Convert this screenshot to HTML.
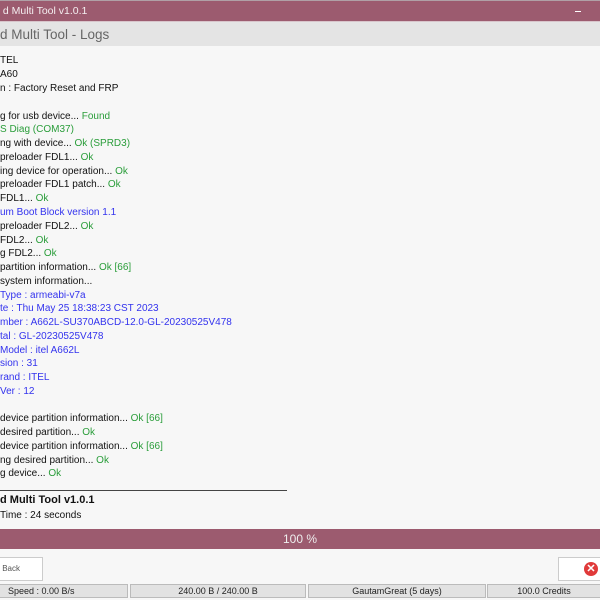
<!DOCTYPE html>
<html><head><style>
body{margin:0;width:600px;height:600px;overflow:hidden;background:#f7f7f7;font-family:"Liberation Sans",sans-serif;position:relative}
.t{position:absolute;top:0;left:0;width:600px;height:21px;background:#9c5b6f;border-top:1px solid #b0a0a6;box-sizing:border-box;color:#f4eef0;font-size:10.5px;line-height:20px}
.h{position:absolute;top:21px;left:0;width:600px;height:25px;background:#e4e4e4;border-top:1px solid #d8c5cb;color:#666;font-size:13.5px;line-height:25px;box-sizing:border-box}
.l{position:absolute;left:0;font-size:10px;line-height:13px;white-space:nowrap;color:#111}
.g{color:#2a9d3a}.b{color:#3333ee}
.p{position:absolute;top:529px;left:0;width:600px;height:20px;background:#9c5b6f;color:#eee;text-align:center;font-size:12px;line-height:20px}
.btn{position:absolute;top:557px;height:24px;background:#fff;border:1px solid #ccc;box-sizing:border-box;font-size:8px;line-height:22px;color:#555}
.s{position:absolute;top:584px;height:14px;background:#e2e2e2;border:1px solid #bbb;box-sizing:border-box;font-size:9px;line-height:12px;text-align:center;color:#222}
</style></head><body>
<div class="t">&nbsp;d Multi Tool v1.0.1<div style="position:absolute;left:575px;top:10px;width:6px;height:1px;background:#fff"></div></div>
<div class="h">d Multi Tool - Logs</div>
<div class="l" style="top:54px">TEL</div>
<div class="l" style="top:68px">A60</div>
<div class="l" style="top:82px">n : Factory Reset and FRP</div>
<div class="l" style="top:110px">g for usb device... <span class="g">Found</span></div>
<div class="l g" style="top:123px">S Diag (COM37)</div>
<div class="l" style="top:137px">ng with device... <span class="g">Ok (SPRD3)</span></div>
<div class="l" style="top:151px">preloader FDL1... <span class="g">Ok</span></div>
<div class="l" style="top:165px">ing device for operation... <span class="g">Ok</span></div>
<div class="l" style="top:178px">preloader FDL1 patch... <span class="g">Ok</span></div>
<div class="l" style="top:192px">FDL1... <span class="g">Ok</span></div>
<div class="l b" style="top:206px">um Boot Block version 1.1</div>
<div class="l" style="top:220px">preloader FDL2... <span class="g">Ok</span></div>
<div class="l" style="top:234px">FDL2... <span class="g">Ok</span></div>
<div class="l" style="top:247px">g FDL2... <span class="g">Ok</span></div>
<div class="l" style="top:261px">partition information... <span class="g">Ok [66]</span></div>
<div class="l" style="top:275px">system information...</div>
<div class="l b" style="top:289px">Type : armeabi-v7a</div>
<div class="l b" style="top:302px">te : Thu May 25 18:38:23 CST 2023</div>
<div class="l b" style="top:316px">mber : A662L-SU370ABCD-12.0-GL-20230525V478</div>
<div class="l b" style="top:330px">tal : GL-20230525V478</div>
<div class="l b" style="top:344px">Model : itel A662L</div>
<div class="l b" style="top:357px">sion : 31</div>
<div class="l b" style="top:371px">rand : ITEL</div>
<div class="l b" style="top:385px">Ver : 12</div>
<div class="l" style="top:412px">device partition information... <span class="g">Ok [66]</span></div>
<div class="l" style="top:426px">desired partition... <span class="g">Ok</span></div>
<div class="l" style="top:440px">device partition information... <span class="g">Ok [66]</span></div>
<div class="l" style="top:454px">ng desired partition... <span class="g">Ok</span></div>
<div class="l" style="top:467px">g device... <span class="g">Ok</span></div>
<div style="position:absolute;top:490px;left:0;width:287px;height:1px;background:#444"></div>
<div class="l" style="top:494px;font-weight:bold;font-size:11px">d Multi Tool v1.0.1</div>
<div class="l" style="top:509px">Time : 24 seconds</div>
<div class="p">100 %</div>
<div class="btn" style="left:-1px;width:44px">&nbsp;Back</div>
<div class="btn" style="left:558px;width:44px"><div style="position:absolute;left:25px;top:4px;width:14px;height:14px;border-radius:50%;background:#e03a3a;color:#fff;font-size:11px;line-height:14px;text-align:center;font-weight:bold">✕</div></div>
<div class="s" style="left:-1px;width:129px;text-align:left;padding-left:8px">Speed : 0.00 B/s</div>
<div class="s" style="left:130px;width:176px">240.00 B / 240.00 B</div>
<div class="s" style="left:308px;width:178px">GautamGreat (5 days)</div>
<div class="s" style="left:487px;width:114px">100.0 Credits</div>
</body></html>
